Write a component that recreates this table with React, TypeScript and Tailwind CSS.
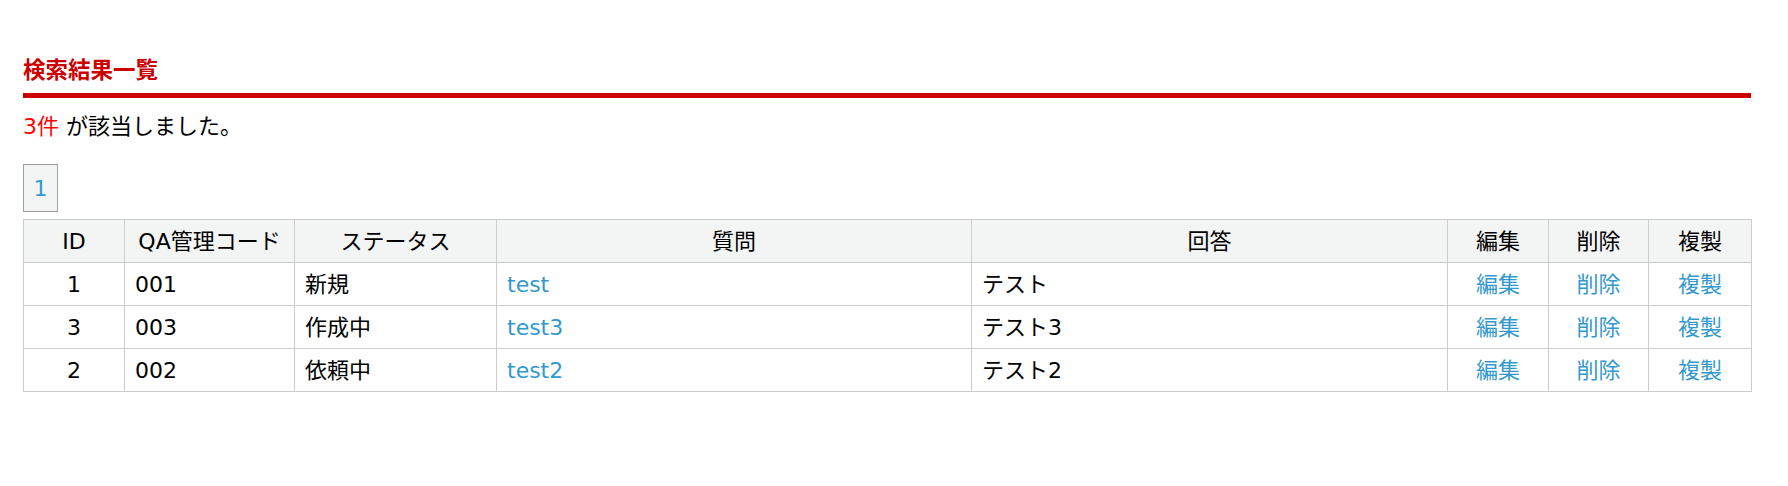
import React from 'react';

type Row = { id: number; code: string; status: string; question: string; answer: string };

const rows: Row[] = [
  { id: 1, code: '001', status: '新規', question: 'test', answer: 'テスト' },
  { id: 3, code: '003', status: '作成中', question: 'test3', answer: 'テスト3' },
  { id: 2, code: '002', status: '依頼中', question: 'test2', answer: 'テスト2' },
];

const font = { fontFamily: '"DejaVu Sans", "Noto Sans CJK JP", sans-serif' };

const App: React.FC = () => {
  return (
    <div className="bg-white min-h-[486px] text-[22px] text-black" style={font}>
      <div className="ml-[23px] w-[1728px] pt-[54px]">
        {/* 見出し */}
        <h2 className="h-[44px] border-b-[5px] border-[#cc0000] text-[22.5px] font-bold leading-[32px] text-[#cc0000]">
          検索結果一覧
        </h2>

        <p className="mt-[16px] h-[26px] leading-[26px]">
          <span className="text-[#ff0000]">3件</span> が該当しました。
        </p>

        {/* ページャー */}
        <div className="mt-[24px] flex">
          <a className="flex h-[48px] w-[35px] items-center justify-center border border-[#a0a0a0] bg-[#f3f4f4] text-[#3399cc]">
            1
          </a>
        </div>

        <table className="mt-[7px] w-[1728px] table-fixed border-collapse">
          <colgroup>
            <col className="w-[101px]" />
            <col className="w-[170px]" />
            <col className="w-[202px]" />
            <col className="w-[475px]" />
            <col className="w-[476px]" />
            <col className="w-[101px]" />
            <col className="w-[100px]" />
            <col className="w-[103px]" />
          </colgroup>
          <thead>
            <tr className="h-[43px] bg-[#f3f4f4]">
              {['ID', 'QA管理コード', 'ステータス', '質問', '回答', '編集', '削除', '複製'].map((h) => (
                <th key={h} className="border border-[#cccccc] px-[2px] text-center font-normal whitespace-nowrap">
                  {h}
                </th>
              ))}
            </tr>
          </thead>
          <tbody>
            {rows.map((r) => (
              <tr key={r.id} className="h-[43px]">
                <td className="border border-[#cccccc] text-center">{r.id}</td>
                <td className="border border-[#cccccc] px-[10px]">{r.code}</td>
                <td className="border border-[#cccccc] px-[10px]">{r.status}</td>
                <td className="border border-[#cccccc] px-[10px]">
                  <a className="text-[#3399cc]">{r.question}</a>
                </td>
                <td className="border border-[#cccccc] px-[10px]">{r.answer}</td>
                <td className="border border-[#cccccc] text-center">
                  <a className="text-[#3399cc]">編集</a>
                </td>
                <td className="border border-[#cccccc] text-center">
                  <a className="text-[#3399cc]">削除</a>
                </td>
                <td className="border border-[#cccccc] text-center">
                  <a className="text-[#3399cc]">複製</a>
                </td>
              </tr>
            ))}
          </tbody>
        </table>
      </div>
    </div>
  );
};

export default App;
